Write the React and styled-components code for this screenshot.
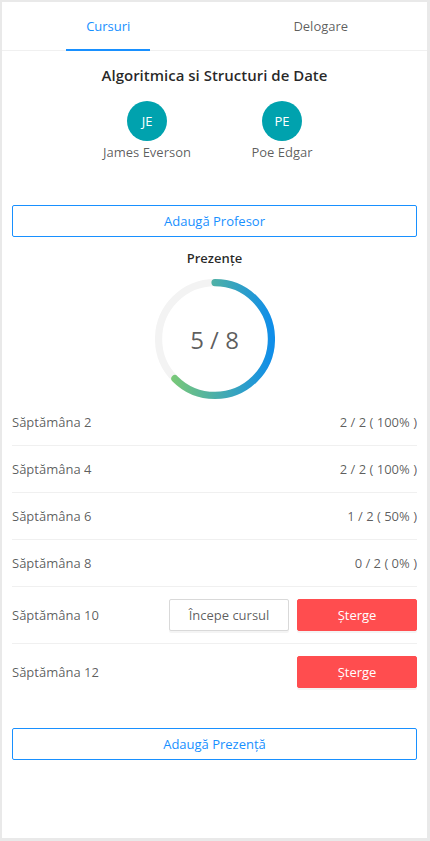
import React from "react"
import styled, { createGlobalStyle } from "styled-components"

const Global = createGlobalStyle`
  html, body {
    margin: 0;
    padding: 0;
    background: #e9e9e9;
  }
  body {
    font-family: "Open Sans", "Noto Sans", Arial, sans-serif;
    font-size: 13px;
    color: rgba(0, 0, 0, 0.65);
  }
  * {
    box-sizing: border-box;
  }
`

const Panel = styled.div`
  margin: 2px;
  width: 425px;
  height: 836px;
  background: #fff;
  display: flex;
  flex-direction: column;
`

const TabBar = styled.div`
  display: flex;
  height: 49px;
  border-bottom: 1px solid #f0f0f0;
`

const Tab = styled.div`
  flex: 1;
  position: relative;
  display: flex;
  align-items: center;
  justify-content: center;
  color: ${(p) => (p.active ? "#1890ff" : "rgba(0, 0, 0, 0.65)")};
  font-size: 13px;

  &::after {
    content: "";
    display: ${(p) => (p.active ? "block" : "none")};
    position: absolute;
    bottom: -1px;
    left: 50%;
    width: 84px;
    margin-left: -42px;
    height: 2px;
    background: #1890ff;
  }
`

const Content = styled.div`
  padding: 0 10px;
  display: flex;
  flex-direction: column;
  align-items: stretch;
`

const Title = styled.div`
  margin-top: 12px;
  text-align: center;
  font-size: 15px;
  line-height: 24px;
  font-weight: 600;
  color: rgba(0, 0, 0, 0.85);
`

const Teachers = styled.div`
  margin-top: 14px;
  display: flex;
  justify-content: center;
  gap: 15px;
`

const Teacher = styled.div`
  width: 120px;
  display: flex;
  flex-direction: column;
  align-items: center;

  .name {
    line-height: 22px;
    white-space: nowrap;
  }
`

const Avatar = styled.div`
  width: 40px;
  height: 40px;
  border-radius: 50%;
  background: #00a2ae;
  color: #fff;
  display: flex;
  align-items: center;
  justify-content: center;
  font-size: 13px;
`

const OutlineButton = styled.button`
  margin-top: ${(p) => p.top || 0}px;
  height: 32px;
  width: 100%;
  border: 1px solid #1890ff;
  border-radius: 2px;
  background: #fff;
  color: #1890ff;
  font-family: inherit;
  font-size: 13px;
  padding: 0 15px;
`

const Section = styled.div`
  margin-top: 10px;
  text-align: center;
  font-weight: 600;
  line-height: 22px;
  color: rgba(0, 0, 0, 0.85);
`

const ProgressWrap = styled.div`
  margin: 10px auto 0;
  width: 120px;
  height: 120px;
  position: relative;

  svg {
    display: block;
  }
  .value {
    position: absolute;
    inset: 0;
    display: flex;
    align-items: center;
    justify-content: center;
    font-size: 24px;
    color: rgba(0, 0, 0, 0.65);
  }
`

const List = styled.div`
  display: flex;
  flex-direction: column;
`

const Row = styled.div`
  display: flex;
  align-items: center;
  justify-content: space-between;
  padding: 12px 0;
  line-height: 22px;
  border-bottom: 1px solid #f0f0f0;

  &:last-child {
    border-bottom: none;
  }
`

const Actions = styled.div`
  display: flex;
  gap: 8px;
`

const ActionButton = styled.button`
  width: 120px;
  height: 32px;
  border-radius: 2px;
  font-family: inherit;
  font-size: 13px;
  border: 1px solid ${(p) => (p.danger ? "#ff4d4f" : "#d9d9d9")};
  background: ${(p) => (p.danger ? "#ff4d4f" : "#fff")};
  color: ${(p) => (p.danger ? "#fff" : "rgba(0, 0, 0, 0.65)")};
  box-shadow: 0 2px 0 rgba(0, 0, 0, 0.045);
`

const weeks = [
  { name: "Săptămâna 2", stat: "2 / 2 ( 100% )" },
  { name: "Săptămâna 4", stat: "2 / 2 ( 100% )" },
  { name: "Săptămâna 6", stat: "1 / 2 ( 50% )" },
  { name: "Săptămâna 8", stat: "0 / 2 ( 0% )" },
  { name: "Săptămâna 10", start: true, remove: true },
  { name: "Săptămâna 12", remove: true },
]

const Progress = ({ done, total }) => {
  const len = 2 * Math.PI * 47
  const path = "M 50,50 m 0,-47 a 47,47 0 1 1 0,94 a 47,47 0 1 1 0,-94"
  return (
    <ProgressWrap>
      <svg width="120" height="120" viewBox="0 0 100 100">
        <defs>
          <linearGradient id="grad" x1="100%" y1="0%" x2="0%" y2="0%">
            <stop offset="0%" stopColor="#108ee9" />
            <stop offset="100%" stopColor="#87d068" />
          </linearGradient>
        </defs>
        <path d={path} stroke="#f3f3f3" strokeWidth="6" fill="none" strokeLinecap="round" />
        <path
          d={path}
          stroke="url(#grad)"
          strokeWidth="6"
          fill="none"
          strokeLinecap="round"
          strokeDasharray={`${(len * done) / total} ${len}`}
        />
      </svg>
      <div className="value">
        {done} / {total}
      </div>
    </ProgressWrap>
  )
}

export default function App() {
  return (
    <>
      <Global />
      <Panel>
        <TabBar>
          <Tab active>Cursuri</Tab>
          <Tab>Delogare</Tab>
        </TabBar>
        <Content>
          <Title>Algoritmica si Structuri de Date</Title>
          <Teachers>
            <Teacher>
              <Avatar>JE</Avatar>
              <div className="name">James Everson</div>
            </Teacher>
            <Teacher>
              <Avatar>PE</Avatar>
              <div className="name">Poe Edgar</div>
            </Teacher>
          </Teachers>
          <OutlineButton top={42}>Adaugă Profesor</OutlineButton>
          <Section>Prezențe</Section>
          <Progress done={5} total={8} />
          <List>
            {weeks.map((w) => (
              <Row key={w.name}>
                <span>{w.name}</span>
                {w.stat && <span>{w.stat}</span>}
                {w.remove && (
                  <Actions>
                    {w.start && <ActionButton>Începe cursul</ActionButton>}
                    <ActionButton danger>Șterge</ActionButton>
                  </Actions>
                )}
              </Row>
            ))}
          </List>
          <OutlineButton top={28}>Adaugă Prezență</OutlineButton>
        </Content>
      </Panel>
    </>
  )
}
